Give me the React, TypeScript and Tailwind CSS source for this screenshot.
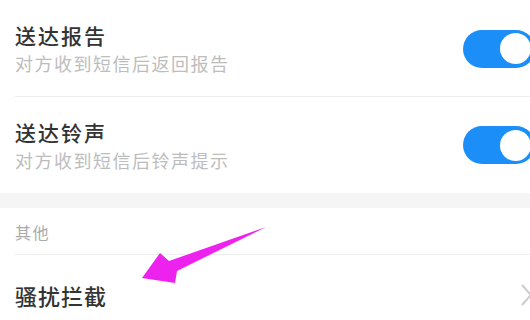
import React from "react";

function Toggle() {
  return (
    <div className="mr-[-5px] flex h-[38px] w-[72px] shrink-0 items-center justify-end rounded-full bg-[#1c8ef7] pr-[4px]">
      <div className="h-[31px] w-[31px] rounded-full bg-white" />
    </div>
  );
}

function SwitchRow({ title, sub, last }: { title: string; sub: string; last?: boolean }) {
  return (
    <div className="flex h-[96px] items-center pl-[15px]">
      <div className={`flex h-full flex-1 items-center ${last ? "" : "border-b border-[#eeeeee]"}`}>
        <div className="flex flex-1 flex-col">
          <div className="text-[21px] font-medium leading-[23px] tracking-[2px] text-[#333333]">{title}</div>
          <div className="mt-[6px] text-[18px] leading-[20px] tracking-[1.5px] text-[#bdbdbd]">{sub}</div>
        </div>
        <Toggle />
      </div>
    </div>
  );
}

export default function App() {
  return (
    <div
      className="relative h-[320px] w-[530px] overflow-hidden bg-white"
      style={{ fontFamily: '"Noto Sans CJK SC", "Noto Sans", sans-serif' }}
    >
      <div className="h-[1px]" />
      <SwitchRow title="送达报告" sub="对方收到短信后返回报告" />
      <SwitchRow title="送达铃声" sub="对方收到短信后铃声提示" last />
      <div className="h-[15px] bg-[#f5f5f5]" />
      <div className="pl-[15px]">
        <div className="flex h-[47px] items-center border-b border-[#eeeeee] pt-[1px] text-[16px] tracking-[1.5px] text-[#aaaaaa]">
          其他
        </div>
      </div>
      <div className="flex h-[70px] items-center pl-[15px]">
        <div className="flex-1 pt-[10px] text-[22px] font-medium leading-[23px] tracking-[1px] text-[#333333]">骚扰拦截</div>
        <svg width="14" height="22" viewBox="0 0 14 22" className="mr-[-4px] mt-[10px]">
          <path d="M2 1 L11 11 L2 21" fill="none" stroke="#cccccc" strokeWidth="2" />
        </svg>
      </div>
      <svg className="pointer-events-none absolute left-0 top-0" width="530" height="320" viewBox="0 0 530 320">
        <polygon
          points="142,278 160,253 169,261 266,227 177,271 175,283"
          fill="#ee22ee"
        />
      </svg>
    </div>
  );
}
